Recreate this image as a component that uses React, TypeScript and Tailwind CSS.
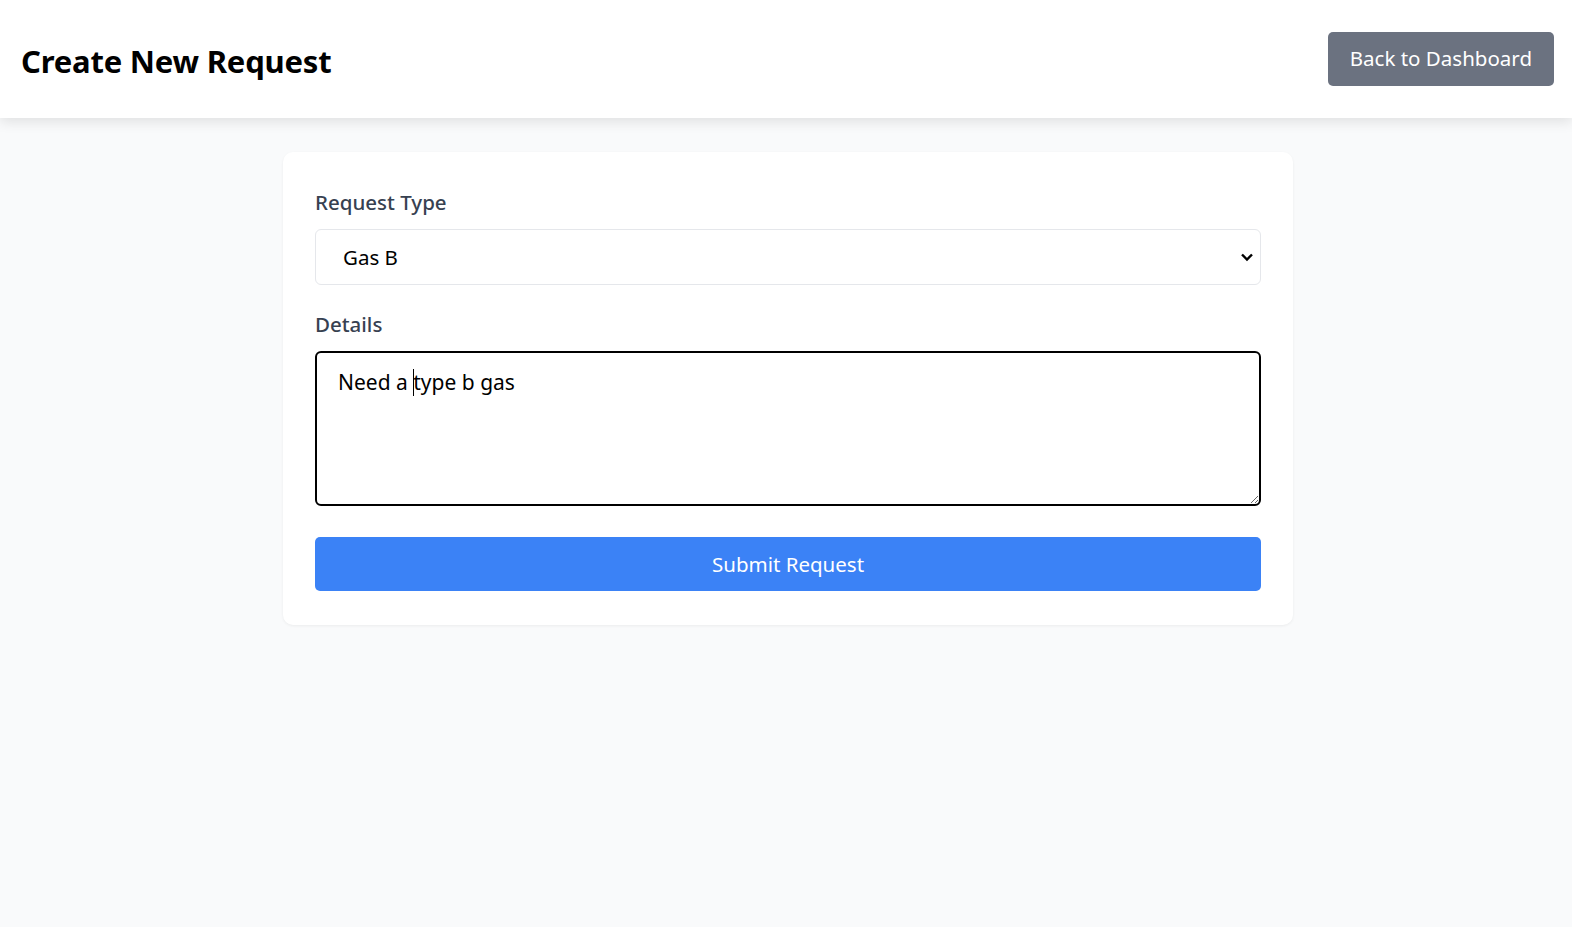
import { useState } from "react";

const font = { fontFamily: '"Noto Sans", "Open Sans", sans-serif' };

const App = () => {
  const [type, setType] = useState("Gas B");
  const [details, setDetails] = useState("Need a type b gas");

  return (
    <div className="min-h-screen bg-[#f9fafb]" style={font}>
      {/* top bar */}
      <header className="h-[118px] bg-white shadow-[0_4px_12px_rgba(0,0,0,0.1)] flex items-center justify-between pl-[21px] pr-[18px]">
        <h1 className="text-[31px] font-bold text-black tracking-[-0.2px] mt-[4px]">Create New Request</h1>
        <button className="h-[54px] px-[22px] rounded-[5px] bg-[#6b7280] text-white text-[20.5px] mb-[1px]">
          Back to Dashboard
        </button>
      </header>

      <main className="flex justify-center pt-[34px] pl-[4px]">
        <div className="w-[1010px] bg-white rounded-[10px] shadow-[0_1px_3px_rgba(0,0,0,0.06)] px-[32px] pt-[32px] pb-[34px] flex flex-col">
          <label className="text-[20.5px] font-medium text-[#374151] leading-[30px] mt-[3px]">Request Type</label>
          <div className="relative mt-[12px]">
            <select
              value={type}
              onChange={(e) => setType(e.target.value)}
              className="w-full h-[56px] appearance-none rounded-[6px] border border-[#e5e7eb] bg-white pl-[27px] text-[20.5px] text-black outline-none"
              style={font}
            >
              <option>Gas A</option>
              <option>Gas B</option>
              <option>Gas C</option>
            </select>
            <svg
              className="absolute right-[7px] top-[23px] pointer-events-none"
              width="14"
              height="10"
              viewBox="0 0 14 10"
              fill="none"
            >
              <path d="M2 2.5l5 5 5-5" stroke="black" strokeWidth="2.4" />
            </svg>
          </div>

          <label className="text-[20.5px] font-medium text-[#374151] leading-[30px] mt-[24px]">Details</label>
          <div className="relative mt-[12px]">
            <textarea
              value={details}
              onChange={(e) => setDetails(e.target.value)}
              className="block w-full h-[155px] rounded-[6px] border-2 border-black bg-white px-[21px] pt-[14px] text-[21px] leading-[30px] text-black outline-none"
              style={font}
            />
            {/* text caret */}
            <span className="absolute left-[98px] top-[18px] w-px h-[27px] bg-black" />
          </div>

          <button className="mt-[31px] h-[54px] rounded-[5px] bg-[#3b82f6] text-white text-[20.5px]">
            Submit Request
          </button>
        </div>
      </main>
    </div>
  );
};

export default App;
